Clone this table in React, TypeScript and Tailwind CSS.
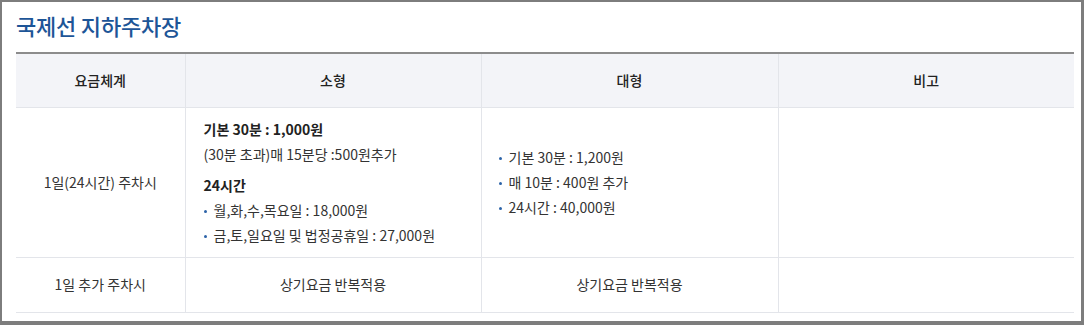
const font = { fontFamily: '"Noto Sans CJK KR", "Noto Sans", sans-serif' };

function Dot({ children }: { children: React.ReactNode }) {
  return (
    <li className="flex items-start">
      <span className="mr-[7px] mt-[12px] h-[3px] w-[3px] shrink-0 rounded-full bg-[#2c63a8]" />
      <span>{children}</span>
    </li>
  );
}

export default function App() {
  return (
    <div
      className="h-[325px] w-[1084px] overflow-hidden border-t-2 border-l-2 border-r-[3px] border-b-4 border-[#7d7d7d] bg-white pl-[14px] pr-[7px] text-[14px] text-[#333]"
      style={font}
    >
      <h2 className="pt-[8px] text-[22px] font-medium leading-[31px] tracking-[-0.2px] text-[#1d5597]">
        국제선 지하주차장
      </h2>
      <table className="mt-[11px] w-full table-fixed border-collapse border-t-2 border-[#8c8c8c]">
        <colgroup>
          <col className="w-[169px]" />
          <col className="w-[296px]" />
          <col className="w-[297px]" />
          <col />
        </colgroup>
        <thead>
          <tr className="h-[54px] bg-[#f3f4f8] text-[#222]">
            <th className="border-b border-[#e3e5ea] font-medium">요금체계</th>
            <th className="border-b border-l border-[#e3e5ea] font-medium">소형</th>
            <th className="border-b border-l border-[#e3e5ea] font-medium">대형</th>
            <th className="border-b border-l border-[#e3e5ea] font-medium">비고</th>
          </tr>
        </thead>
        <tbody className="leading-[25px]">
          <tr className="h-[150px]">
            <td className="border-b border-[#e3e5ea] text-center">1일(24시간) 주차시</td>
            <td className="border-b border-l border-[#e3e5ea] pl-[18px] pt-[9px] pb-[7px] align-top">
              <p className="font-bold text-[#222]">기본 30분 : 1,000원</p>
              <p>(30분 초과)매 15분당 :500원추가</p>
              <p className="mt-[6px] font-bold text-[#222]">24시간</p>
              <ul>
                <Dot>월,화,수,목요일 : 18,000원</Dot>
                <Dot>금,토,일요일 및 법정공휴일 : 27,000원</Dot>
              </ul>
            </td>
            <td className="border-b border-l border-[#e3e5ea] pl-[17px]">
              <ul>
                <Dot>기본 30분 : 1,200원</Dot>
                <Dot>매 10분 : 400원 추가</Dot>
                <Dot>24시간 : 40,000원</Dot>
              </ul>
            </td>
            <td className="border-b border-l border-[#e3e5ea]" />
          </tr>
          <tr className="h-[55px]">
            <td className="border-b border-[#e3e5ea] text-center">1일 추가 주차시</td>
            <td className="border-b border-l border-[#e3e5ea] text-center">상기요금 반복적용</td>
            <td className="border-b border-l border-[#e3e5ea] text-center">상기요금 반복적용</td>
            <td className="border-b border-l border-[#e3e5ea]" />
          </tr>
        </tbody>
      </table>
    </div>
  );
}
